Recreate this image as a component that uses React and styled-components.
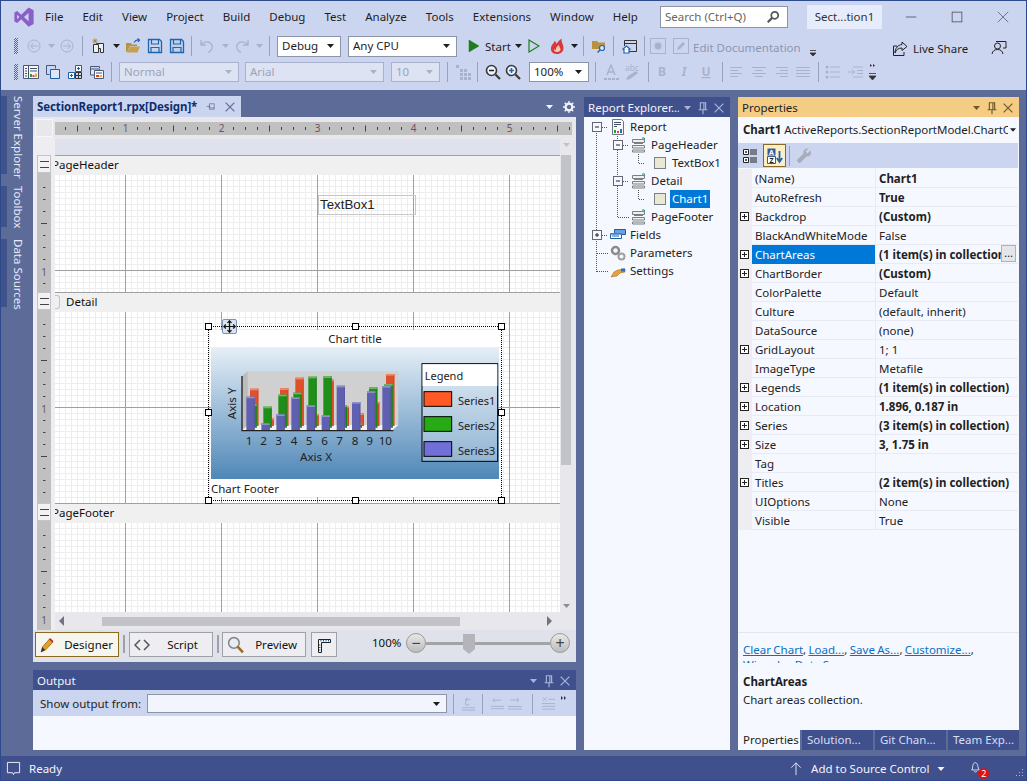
import styled, { createGlobalStyle } from 'styled-components';

const FONT = '"Noto Sans", "Open Sans", sans-serif';

const GlobalStyle = createGlobalStyle`
  html, body { margin: 0; padding: 0; background: #5d6b99; }
  * { box-sizing: border-box; }
  body { font: 11.5px/16px ${FONT}; color: #1a1a1a; }
`;

const Frame = styled.div`
  width: 1027px;
  height: 781px;
  display: flex;
  flex-direction: column;
  border: 1px solid #2c4a8c;
  background: #5d6b99;
  overflow: hidden;
`;

/* ---------- top chrome ---------- */

const Chrome = styled.div`
  background: #ccd5f0;
  flex: none;
  padding-bottom: 5px;
`;

const MenuRow = styled.div`
  display: flex;
  align-items: center;
  height: 32px;
  padding-left: 12px;
`;

const Logo = styled.svg`
  width: 22px;
  height: 22px;
  margin-right: 10px;
  flex: none;
`;

const Menu = styled.div`
  display: flex;
  gap: 19px;
  font-size: 11.5px;
  color: #1e1e1e;
`;

const SearchBox = styled.div`
  margin-left: auto;
  width: 128px;
  height: 22px;
  background: #fff;
  border: 1px solid #8c94a8;
  display: flex;
  align-items: center;
  justify-content: space-between;
  padding: 0 7px 0 4px;
  color: #666;
`;

const TitleBadge = styled.div`
  width: 75px;
  height: 24px;
  margin: 0 6px 0 19px;
  background: #e6ecfb;
  display: flex;
  align-items: center;
  justify-content: center;
  color: #333;
`;

const WinBtn = styled.div`
  width: 46px;
  height: 32px;
  display: flex;
  align-items: center;
  justify-content: center;
  flex: none;
`;

const Toolbar = styled.div`
  display: flex;
  align-items: center;
  height: 26px;
  padding-left: 13px;
  padding-right: 17px;
`;

const Grip = styled.div`
  width: ${p => p.$w}px;
  height: 16px;
  flex: none;
  &::before {
    content: '';
    display: block;
    width: 4px;
    height: 100%;
    background-image: conic-gradient(#626a88 25%, transparent 0 50%, #626a88 0 75%, transparent 0);
    background-size: 2px 2px;
  }
`;

const Slot = styled.div`
  width: ${p => p.$w}px;
  height: 22px;
  flex: none;
  margin-left: ${p => p.$ml || 0}px;
  padding-top: ${p => p.$down || 0}px;
  display: flex;
  align-items: center;
  justify-content: center;
`;

const Sep = styled.div`
  width: ${p => p.$w}px;
  height: 20px;
  flex: none;
  display: flex;
  justify-content: center;
  &::before {
    content: '';
    width: 1px;
    height: 100%;
    background: #98a2c0;
  }
`;

const Combo = styled.div`
  width: ${p => p.$w}px;
  height: ${p => p.$h || 21}px;
  margin-left: ${p => p.$ml}px;
  flex: none;
  display: flex;
  align-items: center;
  justify-content: space-between;
  padding: 0 6px 0 4px;
  background: ${p => (p.$off ? '#dde3f3' : p.$tint || '#fff')};
  border: 1px solid ${p => (p.$off ? '#a9b2cc' : '#8c94a8')};
  color: ${p => (p.$off ? '#9aa3b8' : '#1e1e1e')};
`;

const TextSlot = styled.div`
  width: ${p => p.$w}px;
  margin-left: ${p => p.$ml || 0}px;
  padding-top: ${p => p.$down || 0}px;
  flex: none;
  white-space: nowrap;
  color: ${p => (p.$off ? '#8d96b0' : '#1e1e1e')};
`;

const Push = styled.div`
  flex: 1;
`;

/* ---------- main area ---------- */

const Main = styled.div`
  flex: 1;
  display: flex;
  gap: 8px;
  min-height: 0;
  padding: 6px 7px 6px 0;
`;

const Rail = styled.div`
  width: 32px;
  flex: none;
  display: flex;
  flex-direction: column;
  gap: 12px;
`;

const RailTab = styled.div`
  width: 24px;
  height: ${p => p.$h}px;
  border-left: 6px solid #3f5289;
  writing-mode: vertical-rl;
  padding: 0;
  color: #e4e9f8;
  font-size: 11.5px;
  line-height: 14px;
  white-space: nowrap;
`;

const CenterCol = styled.div`
  width: 543px;
  flex: none;
  display: flex;
  flex-direction: column;
  gap: 8px;
  margin-left: -8px;
`;

const DocPanel = styled.div`
  height: 566px;
  flex: none;
  display: flex;
  flex-direction: column;
`;

const DocTabs = styled.div`
  height: 21px;
  flex: none;
  display: flex;
  align-items: center;
`;

const DocTab = styled.div`
  width: 208px;
  height: 21px;
  background: #ccd5f0;
  display: flex;
  align-items: center;
  padding-left: 4px;
  font-weight: 700;
  font-size: 11.5px;
  color: #0e2f6e;
  white-space: nowrap;
  letter-spacing: -0.1px;
`;

const DocBody = styled.div`
  flex: 1;
  display: flex;
  flex-direction: column;
  background: #e8e8ec;
`;

const RulerRow = styled.div`
  height: 20px;
  flex: none;
  display: flex;
  padding: 2px 4px 0 2px;
`;

const RulerCorner = styled.div`
  width: 18px;
  height: 18px;
  border: 1px solid #f6f6f8;
  flex: none;
`;

const TopRuler = styled.svg`
  display: block;
  margin: 3px 0 0 2px;
  width: 517px;
  height: 13px;
  background: #c0c0c0;
`;

const View = styled.div`
  height: 493px;
  flex: none;
  display: flex;
`;

const Gutter = styled.div`
  width: 22px;
  flex: none;
  background: #eeeef2;
  padding: 18px 4px 0 4px;
`;

const SectionGrip = styled.div`
  height: 18px;
  background: #f2f2f4;
  border: 1px solid #c4c4c8;
  display: flex;
  align-items: center;
  justify-content: center;
  &::before {
    content: '';
    width: 9px;
    height: 5px;
    border-top: 1px solid #444;
    border-bottom: 1px solid #444;
  }
`;

const SideRuler = styled.svg`
  display: block;
  width: 14px;
  height: ${p => p.$h}px;
  background: #c0c0c0;
`;

const ViewRight = styled.div`
  flex: 1;
  display: flex;
  flex-direction: column;
  min-width: 0;
  padding-top: 2px;
`;

const CanvasRow = styled.div`
  height: 473px;
  display: flex;
  flex: none;
`;

const Canvas = styled.div`
  width: 505px;
  flex: none;
  position: relative;
  overflow: hidden;
  background: #fff;
`;

const TopBand = styled.div`
  height: 16px;
  background: #dfe2ec;
`;

const SectionHead = styled.div`
  height: 20px;
  background: #f0f0f0;
  border-top: 1px solid #a0a0a0;
  padding-bottom: 2px;
  display: flex;
  align-items: center;
  color: #101010;
  white-space: nowrap;
`;

const HeadClip = styled.span`
  margin-left: -3px;
`;

const DetailMark = styled.span`
  width: 5px;
  height: 14px;
  border: 1px solid #c4c4c4;
  border-left: 0;
  border-radius: 0 3px 3px 0;
  margin-right: 6px;
`;

const GridBody = styled.div`
  height: ${p => p.$h}px;
  background-color: #fff;
  background-image:
    linear-gradient(to right, #a0a0a0 1px, transparent 1px),
    linear-gradient(to bottom, #a0a0a0 1px, transparent 1px),
    linear-gradient(to right, #eeeeee 1px, transparent 1px),
    linear-gradient(to bottom, #eeeeee 1px, transparent 1px);
  background-size: 96px 100%, 100% 96px, 6px 6px, 6px 6px;
  background-position: 70px 0, 0 95px, 4px 5px, 4px 5px;
`;

const TextBoxCtl = styled.div`
  position: absolute;
  left: 263px;
  top: 56px;
  width: 98px;
  height: 20px;
  border: 1px solid #c8c8c8;
  font: 13.3px/17px "Liberation Sans", Arial, sans-serif;
  padding-left: 1px;
  color: #222;
`;

const ChartCtl = styled.div`
  position: absolute;
  left: 153px;
  top: 187px;
  width: 294px;
  height: 175px;
  border: 1px dotted #000;
  padding: 3px 2px 0 2px;
`;

const ChartTitle = styled.div`
  height: 17px;
  background: #fff;
  text-align: center;
  line-height: 17px;
  color: #222;
`;

const ChartPlot = styled.div`
  height: 132px;
  background: linear-gradient(#e6eff7, #4f87b8);
`;

const ChartFooter = styled.div`
  height: 18px;
  background: #fff;
  line-height: 19px;
  color: #222;
`;

const Handle = styled.span`
  position: absolute;
  left: ${p => p.$x}px;
  top: ${p => p.$y}px;
  width: 7px;
  height: 7px;
  background: #fff;
  border: 1px solid #000;
`;

const MoveGlyph = styled.div`
  position: absolute;
  left: 13px;
  top: -8px;
  width: 15px;
  height: 15px;
  background: #dbe3f2;
  border: 1px solid #7d8fb0;
  border-radius: 2px;
  display: flex;
  align-items: center;
  justify-content: center;
`;

const VScroll = styled.div`
  width: 12px;
  flex: none;
  display: flex;
  flex-direction: column;
  align-items: center;
  justify-content: space-between;
  padding: 4px 0 4px;
  background: #e8e8ec;
`;

const VThumb = styled.div`
  width: 10px;
  height: 310px;
  margin-top: 8px;
  margin-bottom: auto;
  background: #c2c3c9;
`;

const HScroll = styled.div`
  height: 16px;
  width: 501px;
  margin-top: 2px;
  padding: 0 4px 2px;
  display: flex;
  align-items: center;
`;

const HThumb = styled.div`
  width: 358px;
  height: 9px;
  margin-left: 38px;
  margin-right: auto;
  background: #c2c3c9;
`;

const BottomBar = styled.div`
  flex: 1;
  background: #dfe2ea;
  display: flex;
  align-items: flex-start;
  padding: 2px 0 0 2px;
`;

const DesignBtn = styled.div`
  width: ${p => p.$w || 84}px;
  height: 25px;
  margin-left: ${p => p.$ml || 0}px;
  flex: none;
  display: flex;
  align-items: center;
  padding: 0 ${p => p.$pad ?? 4}px;
  justify-content: space-between;
  background: ${p => (p.$active ? '#f7f6ee' : '#eeeef2')};
  border: 1px solid ${p => (p.$active ? '#8a6a1e' : '#a0a0a6')};
  color: #111;
`;

const BtnLabel = styled.span`
  margin-right: ${p => p.$mr}px;
`;

const BtnSep = styled.div`
  width: ${p => p.$w}px;
  height: 18px;
  margin-top: 3px;
  flex: none;
  display: flex;
  justify-content: center;
  &::before {
    content: '';
    width: 2px;
    background: #a0a0a6;
  }
`;

const ZoomBox = styled.div`
  margin-left: 35px;
  width: 198px;
  height: 22px;
  display: flex;
  align-items: center;
  color: #111;
`;

const ZoomLabel = styled.span`
  width: 34px;
`;

const ZoomBtn = styled.div`
  width: 20px;
  height: 20px;
  border-radius: 50%;
  border: 1px solid #9a9a9a;
  background: linear-gradient(#e8e8e8, #bcbcbc);
  flex: none;
  display: flex;
  align-items: center;
  justify-content: center;
  color: #444;
  font-size: 16px;
  line-height: 16px;
`;

const ZoomTrack = styled.div`
  flex: 1;
  height: 3px;
  background: #a4a4a4;
  position: relative;
`;

const ZoomThumb = styled.svg`
  position: absolute;
  left: 37px;
  top: -8px;
`;

/* panels */

const Panel = styled.div`
  display: flex;
  flex-direction: column;
  background: #f6f8ff;
  width: ${p => (p.$w ? `${p.$w}px` : 'auto')};
  flex: ${p => (p.$w ? 'none' : '1')};
  margin-top: ${p => p.$mt || 0}px;
`;

const PanelTitle = styled.div`
  height: 20px;
  flex: none;
  display: flex;
  align-items: center;
  padding: 1px 3px 0 4px;
  background: ${p => (p.$on ? '#f5cc84' : '#40508d')};
  color: ${p => (p.$on ? '#1e1e1e' : '#f2f4fb')};
  white-space: nowrap;
`;

const PanelTitleText = styled.div`
  flex: 1;
  overflow: hidden;
`;

const PanelBtn = styled.div`
  width: 16px;
  height: 16px;
  margin-left: ${p => p.$ml || 0}px;
  margin-right: ${p => p.$mr || 0}px;
  display: flex;
  align-items: center;
  justify-content: center;
  flex: none;
`;

const OutputBar = styled.div`
  height: 26px;
  background: #ccd5f0;
  display: flex;
  align-items: center;
  padding: 1px 0 0 7px;
  flex: none;
  color: #1e1e1e;
`;

const OutputFill = styled.div`
  flex: 1;
  background: #f6f8ff;
`;

const Tree = styled.div`
  position: relative;
  margin-top: 1px;
  flex: 1;
`;

const TreeLines = styled.svg`
  position: absolute;
  left: 0;
  top: 0;
  width: 60px;
  height: 160px;
`;

const TreeRow = styled.div`
  height: 18px;
  display: flex;
  align-items: center;
  padding-left: ${p => [26, 47, 68][p.$level]}px;
  position: relative;
  gap: 2px;
  white-space: nowrap;
  color: #222;
`;

const TreeLabel = styled.span`
  padding: 0 2px;
  height: 18px;
  line-height: 18px;
  background: ${p => (p.$sel ? '#0078d7' : 'transparent')};
  color: ${p => (p.$sel ? '#fff' : '#222')};
`;

const ObjectLine = styled.div`
  height: 26px;
  flex: none;
  display: flex;
  align-items: center;
  padding: 0 1px 0 5px;
  white-space: nowrap;
  color: #1e1e1e;
`;

const ObjectText = styled.div`
  flex: 1;
  overflow: hidden;
  letter-spacing: -0.03px;
  b { font-weight: 700; }
`;

const PropTools = styled.div`
  height: 25px;
  flex: none;
  margin-right: 1px;
  background: #ccd5f0;
  display: flex;
  align-items: center;
  padding-left: 1px;
`;

const SortBtn = styled.div`
  width: 23px;
  height: 23px;
  margin-left: 2px;
  border: 1px solid #8a6a1e;
  background: #fbeecb;
  display: flex;
  align-items: center;
  justify-content: center;
`;

const PropTable = styled.div`
  margin-top: 1px;
  flex: none;
`;

const PropRow = styled.div`
  height: 19px;
  display: grid;
  grid-template-columns: 14px 123px 1fr;
  border-bottom: 1px solid #e8ebf6;
  margin-right: 1px;
`;

const PropGutter = styled.div`
  background: #eeeef2;
  display: flex;
  align-items: center;
  padding-left: 2px;
`;

const PlusBox = styled.span`
  width: 9px;
  height: 9px;
  border: 1px solid #222;
  background:
    linear-gradient(#222, #222) center / 5px 1px no-repeat,
    linear-gradient(#222, #222) center / 1px 5px no-repeat,
    #fff;
`;

const PropName = styled.div`
  padding-left: 3px;
  line-height: 19px;
  white-space: nowrap;
  overflow: hidden;
  background: ${p => (p.$sel ? '#0078d7' : 'transparent')};
  color: ${p => (p.$sel ? '#fff' : '#222')};
`;

const PropValue = styled.div`
  padding-left: 3px;
  border-left: 1px solid #e8ebf6;
  line-height: 19px;
  display: flex;
  min-width: 0;
  font-weight: ${p => (p.$bold ? 700 : 400)};
  color: #222;
`;

const ValueText = styled.span`
  flex: 1;
  min-width: 0;
  white-space: nowrap;
  overflow: hidden;
`;

const EllipsisBtn = styled.span`
  flex: none;
  width: 15px;
  height: 17px;
  margin-right: 2px;
  background: #e6e6ea;
  border: 1px solid #b0b0b6;
  text-align: center;
  font-weight: 400;
  line-height: 13px;
`;

const PropSpace = styled.div`
  flex: 1;
  border-bottom: 1px solid #e4e6ee;
`;

const Commands = styled.div`
  height: 30px;
  flex: none;
  overflow: hidden;
  padding: 9px 5px 0;
  line-height: 15px;
  word-spacing: -0.6px;
  color: #333;
  a {
    color: #0a6fc2;
    text-decoration: underline;
  }
`;

const Description = styled.div`
  height: 67px;
  flex: none;
  padding: 10px 5px 0;
  line-height: 18px;
  color: #1e1e1e;
  b {
    display: block;
    font-weight: 700;
  }
`;

const ToolTabs = styled.div`
  display: flex;
  height: 20px;
  flex: none;
  gap: 2px;
  background: #5d6b99;
`;

const ToolTab = styled.div`
  flex: ${p => (p.$on ? '0 0 62px' : '1')};
  background: ${p => (p.$on ? '#f6f8ff' : '#40508d')};
  color: ${p => (p.$on ? '#1e1e1e' : '#d6def6')};
  padding-left: 5px;
  line-height: 19px;
  white-space: nowrap;
  overflow: hidden;
`;

/* status bar */

const StatusBar = styled.div`
  height: 24px;
  flex: none;
  background: #40508d;
  color: #f2f4fb;
  display: flex;
  align-items: center;
  padding: 1px 0 0 5px;
`;

const StatusItem = styled.div`
  display: flex;
  align-items: center;
  gap: ${p => p.$gap || 0}px;
  margin-left: ${p => p.$ml || 0}px;
`;

const BellWrap = styled.div`
  position: relative;
  width: 12px;
  height: 16px;
  margin-left: 25px;
`;

const Badge = styled.span`
  position: absolute;
  left: 8px;
  top: 7px;
  width: 11px;
  height: 11px;
  border-radius: 50%;
  background: #e31010;
  color: #fff;
  font-size: 9px;
  line-height: 11px;
  text-align: center;
`;

const ResizeGrip = styled.svg`
  margin-left: auto;
  margin-right: 2px;
  align-self: flex-end;
  margin-bottom: 2px;
`;

/* ---------- icons ---------- */

const Ico = ({ size = 16, children }) => (
  <svg width={size} height={size} viewBox="0 0 16 16" fill="none">{children}</svg>
);

const Caret = ({ color = '#1e1e1e', w = 7 }) => (
  <svg width={w} height="4" viewBox="0 0 7 4"><path d="M0 0h7L3.500 4z" fill={color} /></svg>
);

const PinIcon = ({ color }) => (
  <Ico size={14}>
    <path d="M5 2h6v8H5zM9 2v8M3 10h10M8 10v5" stroke={color} strokeWidth="1.300" />
  </Ico>
);

const CloseIcon = ({ color, size = 14 }) => (
  <Ico size={size}>
    <path d="M3 3l10 10M13 3L3 13" stroke={color} strokeWidth="1.400" />
  </Ico>
);

const PanelButtons = ({ color }) => (
  <>
    <PanelBtn><Caret color={color} w={9} /></PanelBtn>
    <PanelBtn><PinIcon color={color} /></PanelBtn>
    <PanelBtn><CloseIcon color={color} /></PanelBtn>
  </>
);

const OFF = '#a9b2cc';

const CircleArrow = ({ dir }) => (
  <Ico>
    <circle cx="8" cy="8" r="6" stroke={OFF} />
    <path d={dir < 0 ? 'M12 8H5M7.500 5L4.500 8l3 3' : 'M4 8h7M8.500 5l3 3-3 3'} stroke={OFF} />
  </Ico>
);

const NewProject = () => (
  <Ico>
    <path d="M5.500 5.500h7v9h-3v-4h-4z" fill="#eef0f8" stroke="#333" />
    <path d="M2.500 6.500h5v8h-5z" fill="#eef0f8" stroke="#333" />
    <path d="M4 0.500v5M1.500 3h5M2.300 1.300l3.400 3.400M5.700 1.300L2.300 4.700" stroke="#b08a3a" />
  </Ico>
);

const OpenFolder = () => (
  <Ico>
    <path d="M1 5h5l1 1.500h5V8H4.500L2 14H1z" fill="#b8923e" />
    <path d="M4.500 8.500H15L12.500 14.500H2z" fill="#c8a14c" />
    <path d="M9 4.500Q11 1.500 14 2M12.500 0.500L14.500 2l-1.500 2" stroke="#1f5fa8" strokeWidth="1.200" />
  </Ico>
);

const SaveIcon = ({ fill = 'none' }) => (
  <Ico>
    <path d="M1.500 1.500h11l2 2v11h-13z" fill={fill} stroke="#1d66ae" strokeWidth="1.300" />
    <path d="M4.500 2v4h7V2M4 14.500V9.500h8v5" stroke="#1d66ae" strokeWidth="1.200" />
  </Ico>
);

const UndoIcon = ({ flip }) => (
  <Ico>
    <g transform={flip ? 'translate(16 0) scale(-1 1)' : undefined}>
      <path d="M2 2v5h5M2.500 6.500C5 3 11 3 13 7c1 3-1 6-4 7.500" stroke={OFF} strokeWidth="1.300" />
    </g>
  </Ico>
);

const PlayIcon = ({ hollow }) => (
  <svg width="12" height="14" viewBox="0 0 12 14">
    <path d="M1 1l10 6-10 6z" fill={hollow ? 'none' : '#1b7e1b'} stroke="#1b7e1b" strokeWidth={hollow ? 1.2 : 0.5} />
  </svg>
);

const FireIcon = () => (
  <Ico>
    <path d="M8 16C3 16 1.500 12.500 2 9.500 2.500 6.500 5 5.500 5.500 3 7 4 7.500 5 7.500 6 9 4 10 2 13 0.500 11.500 3 14.500 6 14.500 10 14.500 13.500 12 16 8 16z" fill="#d8383a" />
    <path d="M8 14c-2.500 0-3.500-1.500-3-3.500.5 1 1 1.500 2 1.500-.5-2 1-4 3-5 0 2 1.500 3 1.500 4.500S10 14 8 14z" fill="#f4c9b8" />
  </Ico>
);

const FolderSearch = () => (
  <Ico>
    <path d="M1 3h5l1.500 1.500H14V11H1z" fill="#b8923e" />
    <circle cx="11" cy="10" r="2.500" fill="#dfe8f5" stroke="#1d66ae" strokeWidth="1.200" />
    <path d="M9 12l-2.500 2.500" stroke="#1d66ae" strokeWidth="1.500" />
  </Ico>
);

const HomeWindow = () => (
  <Ico>
    <path d="M2.500 2.500h12v11H7M2.500 2.500V8M2.500 5.500h12" stroke="#333" />
    <path d="M0.500 11.500L4.500 8l4 3.500M2 11v4h5v-4" stroke="#1d66ae" strokeWidth="1.200" fill="#fff" />
  </Ico>
);

const OffCircle = () => (
  <Ico>
    <rect x="0.500" y="0.500" width="15" height="15" stroke={OFF} />
    <circle cx="8" cy="8" r="4" fill={OFF} stroke="#c6cde2" strokeWidth="1.500" />
  </Ico>
);

const OffPencil = () => (
  <Ico>
    <rect x="0.500" y="0.500" width="15" height="15" stroke={OFF} />
    <path d="M4 12l1-3 5-5 2 2-5 5z" fill={OFF} />
  </Ico>
);

const LiveShare = () => (
  <Ico>
    <path d="M10 1l5 4.500-5 4V7C6 7 4 9 3 12c0-5 3-8 7-8.500zM12 11v3.500H1.500V5H5" stroke="#222" fill="none" />
  </Ico>
);

const Feedback = () => (
  <Ico>
    <circle cx="6.500" cy="6" r="3" stroke="#222" />
    <path d="M1 14c.5-3 2.500-4.500 5.500-4.500S11.500 11 12 14" stroke="#222" />
    <path d="M5 1.500h10V8h-3" stroke="#222" />
  </Ico>
);

const ReportIcon = () => (
  <Ico>
    <path d="M2.500 0.500h9l2 2v13h-11z" fill="#f8f8f8" stroke="#6b7280" />
    <path d="M4 3.500h7M4 5.500h7M4 7.500h3" stroke="#44506a" />
    <path d="M4 14v-3h2v3z" fill="#2aa02a" />
    <path d="M7 14v-2h2v2z" fill="#d8452a" />
    <path d="M10 14v-4h2v4z" fill="#2b70c0" />
  </Ico>
);

const ReportPane = () => (
  <Ico>
    <path d="M0.500 1.500h15v13h-15z" fill="#f4f6fb" stroke="#4a5878" />
    <path d="M5.500 2v12M2 4.500h2M2 7h2M2 9.500h2M2 12h2M7 4.500h7M7 7h7" stroke="#44506a" />
    <path d="M7 13V10h2v3z" fill="#2aa02a" />
    <path d="M9.500 13v-2h2v2z" fill="#d8452a" />
    <path d="M12 13V9.500h2V13z" fill="#e0b040" />
  </Ico>
);

const CopyPage = () => (
  <Ico>
    <path d="M1.500 1.500h9v3M1.500 1.500v9h3" stroke="#4a5878" />
    <path d="M5.500 5.500h9v9h-9z" fill="#dfe6f5" stroke="#1d5ea0" />
  </Ico>
);

const GroupBoxes = () => (
  <Ico>
    <path d="M8.500 1.500h6v6h-6zM1.500 8.500h6v6h-6z" fill="#fff" stroke="#1d5ea0" />
    <path d="M8.500 8.500h6v6h-6zM11.500 8.500v6M8.500 11.500h6" stroke="#333" />
    <path d="M11.500 3v3M10 4.500h3M4.500 10v3M3 11.500h3" stroke="#1d5ea0" />
  </Ico>
);

const StackReport = () => (
  <Ico>
    <path d="M1.500 5V2.500h9V4" stroke="#4a5878" />
    <path d="M1.500 5h9v6h-9z" fill="#dfe6f5" stroke="#4a5878" />
    <path d="M5.500 6.500h9v8h-9z" fill="#fff" stroke="#4a5878" />
    <path d="M7 9h6" stroke="#44506a" />
    <path d="M7 11h3v2H7z" fill="#d8452a" />
    <path d="M10.500 11h2.500v2h-2.500z" fill="#e0b040" />
  </Ico>
);

const DottedGrid = () => (
  <Ico>
    <path d="M1 1h3v3H1zM5 5h3v3H5zM9 9h3v3H9zM5 9h3v3H5zM9 5h3v3H9zM13 9h3v3h-3zM9 13h3v3H9zM13 13h3v3h-3zM5 13h3v3H5z" fill={OFF} />
  </Ico>
);

const Magnifier = ({ plus }) => (
  <Ico>
    <circle cx="6.500" cy="6.500" r="5" fill="#eef2fa" stroke="#3a3a3a" strokeWidth="1.600" />
    <path d="M10.500 10.500l4.500 4.500" stroke="#3a3a3a" strokeWidth="2.200" />
    <path d={plus ? 'M4 6.500h5M6.500 4v5' : 'M4 6.500h5'} stroke={plus ? '#1d66ae' : '#222'} strokeWidth="1.500" />
  </Ico>
);

const FontColor = () => (
  <Ico>
    <path d="M4 11L8 1l4 10M5.500 8h5" stroke={OFF} strokeWidth="1.500" />
    <path d="M1 14h3v2H1zM5 14h3v2H5zM9 14h3v2H9zM13 14h3v2h-3z" fill={OFF} />
  </Ico>
);

const Highlight = () => (
  <svg width="22" height="18" viewBox="0 0 22 18">
    <text x="3" y="8" fontSize="8.500" fill={OFF} fontFamily={FONT}>abc</text>
    <path d="M4 17l2-4 8-5 2 2-8 6z" fill={OFF} />
  </svg>
);

const Align = ({ kind }) => {
  const rows = kind === 'left' ? [[1, 13], [1, 9], [1, 13], [1, 9]]
    : kind === 'center' ? [[1, 15], [4, 12], [1, 15], [4, 12]]
      : kind === 'right' ? [[3, 15], [7, 15], [3, 15], [7, 15]]
        : [[1, 15], [1, 15], [1, 15], [1, 15]];
  return (
    <Ico>
      {rows.map((r, i) => <path key={i} d={`M${r[0]} ${3.5 + i * 3}H${r[1]}`} stroke={OFF} />)}
    </Ico>
  );
};

const FmtLetter = ({ ch, style }) => (
  <svg width="18" height="20" viewBox="0 0 18 20">
    <text x="9" y="14" textAnchor="middle" fontSize="12" fontWeight="700" fontFamily={FONT} fontStyle={style} fill={OFF}
      textDecoration={ch === 'U' ? 'underline' : undefined}>{ch}</text>
  </svg>
);

const ListIcon = () => (
  <Ico>
    <circle cx="2" cy="3" r="1.500" fill={OFF} /><circle cx="2" cy="8" r="1.500" fill={OFF} /><circle cx="2" cy="13" r="1.500" fill={OFF} />
    <path d="M5 3h10M5 8h10M5 13h10" stroke={OFF} />
  </Ico>
);

const IndentIcon = () => (
  <Ico>
    <path d="M6 3h10M6 13h10M10 6.500h6M10 9.500h6M1 8h6M5 5.500L7.500 8 5 10.500" stroke={OFF} />
  </Ico>
);

const MoreSmall = () => (
  <svg width="6" height="12" viewBox="0 0 6 12">
    <path d="M0 5.500h6M0 8h6L3 11z" stroke="#333" fill="#333" strokeWidth="0.800" />
  </svg>
);

const MoreDouble = () => (
  <svg width="7" height="18" viewBox="0 0 7 18">
    <path d="M1 1l2 1.500L1 4zM4 1l2 1.500L4 4z" fill="#333" />
    <path d="M0 10.500h7M0 13h7l-3.500 4z" stroke="#333" fill="#333" strokeWidth="0.800" />
  </svg>
);

const SectionIcon = () => (
  <Ico>
    <path d="M1.500 2.500h12v3h-12zM1.500 8.500h12v2.500h-12zM1.500 13h12v2h-12z" fill="#f0f0e8" stroke="#7a8088" />
    <path d="M3 6.500h9" stroke="#7a8088" />
    <path d="M11 1h2.500v1.500" stroke="#2f8a7a" />
  </Ico>
);

const BoxIcon = () => (
  <Ico>
    <rect x="2.500" y="2.500" width="11" height="11" fill="#e8e8d4" stroke="#7a8088" />
  </Ico>
);

const FieldsIcon = () => (
  <Ico>
    <path d="M4.500 2.500h11v5h-11z" fill="#6ca0dc" stroke="#1d5ea0" />
    <path d="M0.500 6.500h11v5h-11z" fill="#fff" stroke="#1d5ea0" />
    <path d="M2 9h7" stroke="#1d5ea0" />
    <path d="M0.500 6.500h11v1.500h-11z" fill="#6ca0dc" />
  </Ico>
);

const GearsIcon = () => (
  <Ico>
    <circle cx="5.500" cy="5.500" r="3.500" fill="none" stroke="#8a8a8a" strokeWidth="2.500" />
    <circle cx="11.500" cy="11.500" r="3" fill="none" stroke="#a0a0a0" strokeWidth="2" />
  </Ico>
);

const SettingsIcon = () => (
  <Ico>
    <path d="M1 14l3-5 4-2 7-1v3l-5 1-3 3z" fill="#e8a040" stroke="#a07020" strokeWidth="0.600" />
    <path d="M11 5.500h4v3h-4z" fill="#2b70c0" />
  </Ico>
);

const CategoryIcon = () => (
  <Ico>
    <path d="M1.500 1.500h5v5h-5zM1.500 9.500h5v5h-5z" fill="#fff" stroke="#222" />
    <path d="M3 4h2M4 3v2M3 12h2M4 11v2M8 2h7M8 4h7M8 6h7M8 10h7M8 12h7M8 14h7" stroke="#222" />
  </Ico>
);

const AlphaIcon = () => (
  <Ico>
    <path d="M0.500 0.500h8v7h-8z" fill="#3a5a92" />
    <path d="M0.500 8.500h8v7h-8z" fill="#fff" stroke="#3a5a92" />
    <text x="4.500" y="6.500" textAnchor="middle" fontSize="7" fontWeight="700" fill="#fff" fontFamily={FONT}>A</text>
    <text x="4.500" y="14.500" textAnchor="middle" fontSize="7" fontWeight="700" fill="#222" fontFamily={FONT}>Z</text>
    <path d="M12.500 3v11M9.800 10l2.700 4 2.700-4" stroke="#1d66ae" strokeWidth="1.800" />
  </Ico>
);

const WrenchIcon = () => (
  <Ico>
    <path d="M14.500 2.500l-3 3-2-2 3-3C9.500 0 7 2 7.500 5.500L1 12c-.5 1 2 3.500 3 3l6.500-6.500C14 9 16 6 14.500 2.500z" fill="#a8adb8" />
  </Ico>
);

const PencilIcon = () => (
  <Ico>
    <path d="M1 15l1.500-5 7-8 3.500 3-7.500 8z" fill="#e8a020" stroke="#7a5a10" strokeWidth="0.700" />
    <path d="M9 2.500l1-1.500 3.500 3-1 1.500z" fill="#c03030" />
    <path d="M1 15l1.500-5 2.500 3z" fill="#333" />
  </Ico>
);

const ScriptIcon = () => (
  <Ico>
    <path d="M6 3L1 8l5 5M10 3l5 5-5 5" stroke="#555" strokeWidth="1.500" />
  </Ico>
);

const RulerGlyph = () => (
  <Ico>
    <path d="M2.500 2.500h12v3h-9v10h-3z" fill="#f6f6f6" stroke="#222" />
    <path d="M5 3v1.500M7.500 3v1.500M10 3v1.500M12.500 3v1.500M3 8h1.500M3 10.500h1.500M3 13h1.500" stroke="#1d66ae" />
  </Ico>
);

const LargeGlass = () => (
  <svg width="17" height="18" viewBox="0 0 16 17">
    <circle cx="6.500" cy="6.500" r="5" fill="#e8eef6" stroke="#888" strokeWidth="1.500" />
    <path d="M10 10l5 5.500" stroke="#a06a20" strokeWidth="2.400" />
  </svg>
);

const OutGlyph = ({ d }) => <Ico><path d={d} stroke={OFF} /></Ico>;

/* ---------- rulers ---------- */

const HorizontalTicks = () => {
  const marks = [];
  for (let k = 0; k < 43; k++) {
    const x = 10.5 + 12 * k;
    if (k % 8 === 5) {
      marks.push(<text key={k} x={x} y="10" fontSize="10" textAnchor="middle" fill="#6b5566" fontFamily={FONT}>{(k + 3) / 8}</text>);
    } else {
      const long = k % 8 === 1;
      marks.push(<path key={k} d={`M${x} ${long ? 3.5 : 5}V${long ? 9.5 : 8}`} stroke="#444" />);
    }
  }
  return <TopRuler>{marks}</TopRuler>;
};

const VerticalTicks = ({ h }) => {
  const marks = [];
  for (let k = 0; 14 + 12 * k < h; k++) {
    const y = 14.5 + 12 * k;
    if (k % 8 === 7) {
      marks.push(<text key={k} x="7" y={y + 4} fontSize="10" textAnchor="middle" fill="#6b5566" fontFamily={FONT}>{(k + 1) / 8}</text>);
    } else {
      const long = k % 8 === 3;
      marks.push(<path key={k} d={`M${long ? 4 : 6} ${y}H${long ? 10 : 8.5}`} stroke="#444" />);
    }
  }
  return <SideRuler $h={h}>{marks}</SideRuler>;
};

/* ---------- chart ---------- */

const red = [[152, 236], [198, 325], [242, 235], [288, 203], [333, 312], [378, 209], [424, 288], [469, 310], [515, 276], [560, 192]];
const green = [[147, 283], [192, 290], [237, 254], [282, 248], [327, 200], [372, 199], [418, 286], [463, 340], [509, 232], [555, 222]];
const blue = [[141, 260], [186, 340], [231, 313], [276, 262], [322, 286], [367, 316], [412, 227], [458, 276], [503, 244], [549, 228]];
const labels = [149, 193, 238, 284, 329, 376, 421, 467, 511, 558];

const Bars = ({ data, base, main, side, top }) => data.map(([x, y], i) => (
  <g key={i}>
    <rect x={x} y={y} width="25" height={base - y} fill={main} />
    <rect x={x + 22} y={y} width="3" height={base - y} fill={side} />
    <rect x={x} y={y} width="25" height="5" fill={top} />
  </g>
));

const PlotSvg = styled.svg`
  display: block;
  font-family: ${FONT};
  font-size: 33px;
  fill: #222;
`;

const ChartDrawing = () => (
  <PlotSvg width="288" height="132" viewBox="35 111 864 396">
    <path d="M145 184H597V345H145z" fill="#d0d0d0" />
    <path d="M128 198L145 184V345L128 360z" fill="#bcbcbc" />
    <path d="M128 360L145 345H597L580 360z" fill="#f2f2f2" />
    <Bars data={red} base={348} main="#e0502a" side="#cc4826" top="#ec8a70" />
    <Bars data={green} base={353} main="#1f8f1a" side="#1b8217" top="#6cb868" />
    <Bars data={blue} base={360} main="#6060b0" side="#5858a6" top="#9090cc" />
    <path d="M128 198V362H582" stroke="#222" strokeWidth="4" fill="none" />
    {labels.map((x, i) => <text key={i} x={x} y="404" fontSize="35" textAnchor="middle">{i + 1}</text>)}
    <text x="350" y="454" fontSize="35" textAnchor="middle">Axis X</text>
    <text transform="translate(110 280) rotate(-90)" fontSize="35" textAnchor="middle">Axis Y</text>
    <rect x="668" y="161" width="227" height="293" fill="#fff" fillOpacity="0.3" stroke="#000" strokeWidth="3" />
    <rect x="670" y="163" width="224" height="65" fill="#fff" />
    <text x="676" y="209">Legend</text>
    <rect x="674" y="245" width="83" height="44" fill="#ff5a26" stroke="#000" strokeWidth="3" />
    <rect x="674" y="320" width="83" height="44" fill="#28a916" stroke="#000" strokeWidth="3" />
    <rect x="674" y="395" width="83" height="44" fill="#7070d8" stroke="#000" strokeWidth="3" />
    <text x="776" y="284">Series1</text>
    <text x="776" y="359">Series2</text>
    <text x="776" y="434">Series3</text>
  </PlotSvg>
);

/* ---------- data ---------- */

const menus = ['File', 'Edit', 'View', 'Project', 'Build', 'Debug', 'Test', 'Analyze', 'Tools', 'Extensions', 'Window', 'Help'];

const props = [
  ['(Name)', 'Chart1', true],
  ['AutoRefresh', 'True', true],
  ['Backdrop', '(Custom)', true, true],
  ['BlackAndWhiteMode', 'False'],
  ['ChartAreas', '(1 item(s) in collection)', true, true],
  ['ChartBorder', '(Custom)', true, true],
  ['ColorPalette', 'Default'],
  ['Culture', '(default, inherit)'],
  ['DataSource', '(none)'],
  ['GridLayout', '1; 1', false, true],
  ['ImageType', 'Metafile'],
  ['Legends', '(1 item(s) in collection)', true, true],
  ['Location', '1.896, 0.187 in', true, true],
  ['Series', '(3 item(s) in collection)', true, true],
  ['Size', '3, 1.75 in', true, true],
  ['Tag', ''],
  ['Titles', '(2 item(s) in collection)', true, true],
  ['UIOptions', 'None'],
  ['Visible', 'True'],
];

const treeRows = [
  [0, 'Report', <ReportIcon key="i" />],
  [1, 'PageHeader', <SectionIcon key="i" />],
  [2, 'TextBox1', <BoxIcon key="i" />],
  [1, 'Detail', <SectionIcon key="i" />],
  [2, 'Chart1', <BoxIcon key="i" />, true],
  [1, 'PageFooter', <SectionIcon key="i" />],
  [0, 'Fields', <FieldsIcon key="i" />],
  [0, 'Parameters', <GearsIcon key="i" />],
  [0, 'Settings', <SettingsIcon key="i" />],
];

const handles = [[-4, -4], [143, -4], [289, -4], [-4, 82], [289, 82], [-4, 170], [143, 170], [289, 170]];

const Expander = ({ x, y, plus }) => (
  <g>
    <rect x={x + 0.5} y={y + 0.5} width="9" height="9" fill="#f6f8ff" stroke="#667" />
    <path d={plus ? `M${x + 3} ${y + 5}h4M${x + 5} ${y + 3}v4` : `M${x + 3} ${y + 5}h4`} stroke="#222" />
  </g>
);

export default function App() {
  return (
    <Frame>
      <GlobalStyle />
      <Chrome>
        <MenuRow>
          <Logo viewBox="0 0 24 24">
            <path fillRule="evenodd" fill="#8a60c8" d="M17 1.500L22.500 4.500V19.500L17 22.500L9 14.500L4.500 18.500L1.500 17V7L4.500 5.500L9 9.500ZM17 7.500L12 12L17 16.500ZM4.500 9.500V14.500L7 12Z" />
          </Logo>
          <Menu>{menus.map(m => <span key={m}>{m}</span>)}</Menu>
          <SearchBox>
            Search (Ctrl+Q)
            <Ico size={14}>
              <circle cx="10" cy="6" r="4" stroke="#555" strokeWidth="2" />
              <path d="M7 9l-5 5" stroke="#555" strokeWidth="2.500" />
            </Ico>
          </SearchBox>
          <TitleBadge>Sect...tion1</TitleBadge>
          <WinBtn><Ico size={12}><path d="M1 8h14" stroke="#444" /></Ico></WinBtn>
          <WinBtn><Ico size={12}><rect x="1.500" y="1.500" width="13" height="13" stroke="#444" /></Ico></WinBtn>
          <WinBtn><Ico size={12}><path d="M1 1l14 14M15 1L1 15" stroke="#556" /></Ico></WinBtn>
        </MenuRow>

        <Toolbar>
          <Grip $w={9} />
          <Slot $w={22}><CircleArrow dir={-1} /></Slot>
          <Slot $w={12}><Caret color={OFF} /></Slot>
          <Slot $w={20}><CircleArrow dir={1} /></Slot>
          <Sep $w={11} />
          <Slot $w={22}><NewProject /></Slot>
          <Slot $w={12}><Caret /></Slot>
          <Slot $w={22}><OpenFolder /></Slot>
          <Slot $w={22}><SaveIcon /></Slot>
          <Slot $w={22}><SaveIcon fill="#c2cfea" /></Slot>
          <Sep $w={7} />
          <Slot $w={24}><UndoIcon /></Slot>
          <Slot $w={12}><Caret color={OFF} /></Slot>
          <Slot $w={22}><UndoIcon flip /></Slot>
          <Slot $w={13}><Caret color={OFF} /></Slot>
          <Sep $w={7} />
          <Combo $w={64} $ml={4}>Debug<Caret /></Combo>
          <Combo $w={109} $ml={7}>Any CPU<Caret /></Combo>
          <Slot $w={16} $ml={9}><PlayIcon /></Slot>
          <TextSlot $w={28} $ml={3} $down={2}>Start</TextSlot>
          <Slot $w={10}><Caret /></Slot>
          <Slot $w={22}><PlayIcon hollow /></Slot>
          <Slot $w={24}><FireIcon /></Slot>
          <Slot $w={10}><Caret /></Slot>
          <Sep $w={9} />
          <Slot $w={22}><FolderSearch /></Slot>
          <Sep $w={7} />
          <Slot $w={26}><HomeWindow /></Slot>
          <Sep $w={2} />
          <Slot $w={26}><OffCircle /></Slot>
          <Slot $w={20}><OffPencil /></Slot>
          <TextSlot $w={105} $ml={2} $off $down={3}>Edit Documentation</TextSlot>
          <Slot $w={30} $down={9}><MoreSmall /></Slot>
          <Push />
          <Slot $w={18} $down={5}><LiveShare /></Slot>
          <TextSlot $w={54} $ml={4} $down={5}>Live Share</TextSlot>
          <Slot $w={20} $ml={22} $down={3}><Feedback /></Slot>
        </Toolbar>

        <Toolbar>
          <Grip $w={6} />
          <Slot $w={22}><ReportPane /></Slot>
          <Slot $w={22}><CopyPage /></Slot>
          <Slot $w={22}><GroupBoxes /></Slot>
          <Slot $w={22}><StackReport /></Slot>
          <Sep $w={7} />
          <Combo $w={120} $ml={4} $h={20} $off>Normal<Caret color={OFF} /></Combo>
          <Combo $w={139} $ml={6} $h={20} $off>Arial<Caret color={OFF} /></Combo>
          <Combo $w={49} $ml={7} $h={20} $off>10<Caret color={OFF} /></Combo>
          <Sep $w={14} />
          <Slot $w={18}><DottedGrid /></Slot>
          <Sep $w={11} />
          <Slot $w={20}><Magnifier /></Slot>
          <Slot $w={20}><Magnifier plus /></Slot>
          <Combo $w={60} $ml={6} $h={20}>100%<Caret /></Combo>
          <Sep $w={12} />
          <Slot $w={20}><FontColor /></Slot>
          <Slot $w={24}><Highlight /></Slot>
          <Sep $w={6} />
          <Slot $w={22}><FmtLetter ch="B" /></Slot>
          <Slot $w={22}><FmtLetter ch="I" style="italic" /></Slot>
          <Slot $w={22}><FmtLetter ch="U" /></Slot>
          <Sep $w={10} />
          <Slot $w={20}><Align kind="left" /></Slot>
          <Slot $w={23}><Align kind="center" /></Slot>
          <Slot $w={22}><Align kind="right" /></Slot>
          <Slot $w={22}><Align kind="justify" /></Slot>
          <Sep $w={8} />
          <Slot $w={22}><ListIcon /></Slot>
          <Slot $w={22}><IndentIcon /></Slot>
          <Slot $w={12}><MoreDouble /></Slot>
        </Toolbar>
      </Chrome>

      <Main>
        <Rail>
          <RailTab $h={78}>Server Explorer</RailTab>
          <RailTab $h={41}>Toolbox</RailTab>
          <RailTab $h={68}>Data Sources</RailTab>
        </Rail>

        <CenterCol>
          <DocPanel>
            <DocTabs>
              <DocTab>
                SectionReport1.rpx[Design]*
                <PanelBtn $ml={6}>
                  <Ico size={11}><path d="M1 8h4M5 4h7v8H5zM5 6v4M5 10h7" stroke="#5d6b99" /></Ico>
                </PanelBtn>
                <PanelBtn $ml={3}><CloseIcon color="#5d6b99" /></PanelBtn>
              </DocTab>
              <Push />
              <PanelBtn $mr={4}><Caret color="#f2f4fb" w={9} /></PanelBtn>
              <PanelBtn $mr={-1}>
                <Ico size={12}>
                  <circle cx="8" cy="8" r="4.500" stroke="#f2f4fb" strokeWidth="3" />
                  <path d="M8 0v3M8 13v3M0 8h3M13 8h3M2.300 2.300l2 2M11.700 11.700l2 2M13.700 2.300l-2 2M4.300 11.700l-2 2" stroke="#f2f4fb" strokeWidth="1.800" />
                </Ico>
              </PanelBtn>
            </DocTabs>
            <DocBody>
              <RulerRow>
                <RulerCorner />
                <HorizontalTicks />
              </RulerRow>
              <View>
                <Gutter>
                  <SectionGrip />
                  <VerticalTicks h={119} />
                  <SectionGrip />
                  <VerticalTicks h={193} />
                  <SectionGrip />
                  <VerticalTicks h={109} />
                </Gutter>
                <ViewRight>
                  <CanvasRow>
                    <Canvas>
                      <TopBand />
                      <SectionHead><HeadClip>PageHeader</HeadClip></SectionHead>
                      <GridBody $h={117} />
                      <SectionHead><DetailMark />Detail</SectionHead>
                      <GridBody $h={191} />
                      <SectionHead><HeadClip>PageFooter</HeadClip></SectionHead>
                      <GridBody $h={89} />
                      <TextBoxCtl>TextBox1</TextBoxCtl>
                      <ChartCtl>
                        <ChartTitle>Chart title</ChartTitle>
                        <ChartPlot><ChartDrawing /></ChartPlot>
                        <ChartFooter>Chart Footer</ChartFooter>
                        {handles.map(([x, y]) => <Handle key={`${x}-${y}`} $x={x} $y={y} />)}
                        <MoveGlyph>
                          <Ico size={13}><path d="M8 1v14M1 8h14M5.500 3.500L8 1l2.500 2.500M5.500 12.500L8 15l2.500-2.500M3.500 5.500L1 8l2.500 2.500M12.500 5.500L15 8l-2.500 2.500" stroke="#111" strokeWidth="1.500" /></Ico>
                        </MoveGlyph>
                      </ChartCtl>
                    </Canvas>
                    <VScroll>
                      <Caret color="#c2c3c9" w={9} />
                      <VThumb />
                      <Caret color="#8a8d98" w={9} />
                    </VScroll>
                  </CanvasRow>
                  <HScroll>
                    <svg width="5" height="10" viewBox="0 0 5 10"><path d="M5 0v10L0 5z" fill="#71747e" /></svg>
                    <HThumb />
                    <svg width="5" height="10" viewBox="0 0 5 10"><path d="M0 0v10l5-5z" fill="#71747e" /></svg>
                  </HScroll>
                </ViewRight>
              </View>
              <BottomBar>
                <DesignBtn $active><PencilIcon /><BtnLabel $mr={1}>Designer</BtnLabel></DesignBtn>
                <BtnSep $w={10} />
                <DesignBtn><ScriptIcon /><BtnLabel $mr={10}>Script</BtnLabel></DesignBtn>
                <BtnSep $w={9} />
                <DesignBtn><LargeGlass /><BtnLabel $mr={4}>Preview</BtnLabel></DesignBtn>
                <DesignBtn $w={26} $ml={5}><RulerGlyph /></DesignBtn>
                <ZoomBox>
                  <ZoomLabel>100%</ZoomLabel>
                  <ZoomBtn>−</ZoomBtn>
                  <ZoomTrack>
                    <ZoomThumb width="12" height="20" viewBox="0 0 12 20"><path d="M0 0h12v15l-6 5-6-5z" fill="#b4b4ba" /></ZoomThumb>
                  </ZoomTrack>
                  <ZoomBtn>+</ZoomBtn>
                </ZoomBox>
              </BottomBar>
            </DocBody>
          </DocPanel>

          <Panel>
            <PanelTitle>
              <PanelTitleText>Output</PanelTitleText>
              <PanelButtons color="#a8b4d8" />
            </PanelTitle>
            <OutputBar>
              Show output from:
              <Combo $w={300} $ml={6} $h={19} $tint="#f2f5fe">&nbsp;<Caret /></Combo>
              <Sep $w={14} />
              <Slot $w={15}><OutGlyph d="M1 14.500h14M1 12h14M9 9H5V3h5M7 5L5 3l2-2" /></Slot>
              <Sep $w={14} />
              <Slot $w={15}><OutGlyph d="M1 10.500h14M1 13h14M12 4H3M5 2L3 4l2 2" /></Slot>
              <Slot $w={20}><OutGlyph d="M1 10.500h14M1 13h14M3 4h9M10 2l2 2-2 2" /></Slot>
              <Sep $w={16} />
              <Slot $w={15}><OutGlyph d="M1 7.500h14M1 10.500h14M1 13.500h14M2 1l4 4M6 1L2 5M8 3h7" /></Slot>
              <Slot $w={16}><svg width="7" height="16" viewBox="0 0 7 16"><path d="M1 0l2 2-2 2zM4 0l2 2-2 2z" fill="#333" /></svg></Slot>
            </OutputBar>
            <OutputFill />
          </Panel>
        </CenterCol>

        <Panel $w={146} $mt={1}>
          <PanelTitle>
            <PanelTitleText>Report Explorer...</PanelTitleText>
            <PanelButtons color="#a8b4d8" />
          </PanelTitle>
          <Tree>
            <TreeLines>
              <path strokeDasharray="1 1" stroke="#555" fill="none"
                d="M12.500 15V154M33.500 18V99M54.500 36V45M54.500 72V81M18 9.500H24M39 27.500H45M55 45.500H67M39 63.500H45M55 81.500H67M34 99.500H45M18 117.500H24M13 135.500H24M13 153.500H24" />
              <Expander x={8} y={4} />
              <Expander x={29} y={22} />
              <Expander x={29} y={58} />
              <Expander x={8} y={112} plus />
            </TreeLines>
            {treeRows.map(([level, label, icon, sel]) => (
              <TreeRow key={label} $level={level}>
                {icon}
                <TreeLabel $sel={sel}>{label}</TreeLabel>
              </TreeRow>
            ))}
          </Tree>
        </Panel>

        <Panel $w={281} $mt={1}>
          <PanelTitle $on>
            <PanelTitleText>Properties</PanelTitleText>
            <PanelButtons color="#6b5a2a" />
          </PanelTitle>
          <ObjectLine>
            <ObjectText><b>Chart1</b> ActiveReports.SectionReportModel.ChartControl</ObjectText>
            <Slot $w={10}><Caret w={6} /></Slot>
          </ObjectLine>
          <PropTools>
            <Slot $w={22}><CategoryIcon /></Slot>
            <SortBtn><AlphaIcon /></SortBtn>
            <Sep $w={7} />
            <Slot $w={22}><WrenchIcon /></Slot>
          </PropTools>
          <PropTable>
            {props.map(([name, value, bold, plus]) => (
              <PropRow key={name}>
                <PropGutter>{plus && <PlusBox />}</PropGutter>
                <PropName $sel={name === 'ChartAreas'}>{name}</PropName>
                <PropValue $bold={bold}>
                  <ValueText>{value}</ValueText>
                  {name === 'ChartAreas' && <EllipsisBtn>...</EllipsisBtn>}
                </PropValue>
              </PropRow>
            ))}
          </PropTable>
          <PropSpace />
          <Commands>
            <a>Clear Chart</a>, <a>Load...</a>, <a>Save As...</a>, <a>Customize...</a>,
            <br />
            <a>Wizard...</a>, <a>Data Source...</a>
          </Commands>
          <Description>
            <b>ChartAreas</b>
            Chart areas collection.
          </Description>
          <ToolTabs>
            <ToolTab $on>Properties</ToolTab>
            <ToolTab>Solution...</ToolTab>
            <ToolTab>Git Chan...</ToolTab>
            <ToolTab>Team Exp...</ToolTab>
          </ToolTabs>
        </Panel>
      </Main>

      <StatusBar>
        <StatusItem $gap={8}>
          <Ico size={15}><path d="M1.500 1.500h13v11H9l-1 2-1-2H1.500z" stroke="#f2f4fb" /></Ico>
          <span>Ready</span>
        </StatusItem>
        <StatusItem $ml={727} $gap={8}>
          <Ico size={14}><path d="M8 15V1M2.500 6.500L8 1l5.500 5.500" stroke="#f2f4fb" /></Ico>
          <span>Add to Source Control</span>
          <Caret color="#f2f4fb" w={8} />
        </StatusItem>
        <BellWrap>
          <Ico size={13}><path d="M2 11c1.500-1.500 1-3 1.500-5.500C4 3 5.500 2 6.500 2s2.500 1 3 3.500S10 9.500 11.500 11zM5 12.500a2 2 0 0 0 3.500 0" stroke="#f2f4fb" /></Ico>
          <Badge>2</Badge>
        </BellWrap>
        <ResizeGrip width="10" height="10" viewBox="0 0 10 10">
          <path d="M8 1h1v1H8zM5 4h1v1H5zM8 4h1v1H8zM2 7h1v1H2zM5 7h1v1H5zM8 7h1v1H8z" fill="#a8b4d8" />
        </ResizeGrip>
      </StatusBar>
    </Frame>
  );
}
